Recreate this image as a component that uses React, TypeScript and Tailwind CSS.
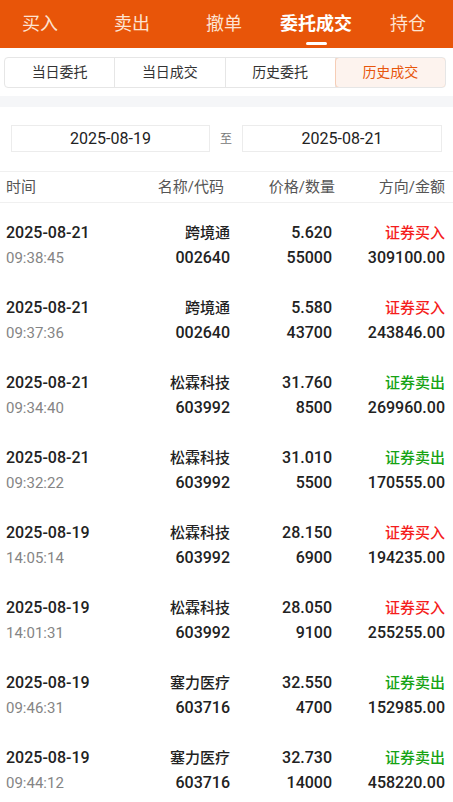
import React from "react";

const FONT = 'Roboto, "Noto Sans CJK SC", "Noto Sans", sans-serif';

type Row = {
  date: string;
  time: string;
  name: string;
  code: string;
  price: string;
  qty: string;
  dir: string;
  amount: string;
  buy: boolean;
};

const rows: Row[] = [
  { date: "2025-08-21", time: "09:38:45", name: "跨境通", code: "002640", price: "5.620", qty: "55000", dir: "证券买入", amount: "309100.00", buy: true },
  { date: "2025-08-21", time: "09:37:36", name: "跨境通", code: "002640", price: "5.580", qty: "43700", dir: "证券买入", amount: "243846.00", buy: true },
  { date: "2025-08-21", time: "09:34:40", name: "松霖科技", code: "603992", price: "31.760", qty: "8500", dir: "证券卖出", amount: "269960.00", buy: false },
  { date: "2025-08-21", time: "09:32:22", name: "松霖科技", code: "603992", price: "31.010", qty: "5500", dir: "证券卖出", amount: "170555.00", buy: false },
  { date: "2025-08-19", time: "14:05:14", name: "松霖科技", code: "603992", price: "28.150", qty: "6900", dir: "证券买入", amount: "194235.00", buy: true },
  { date: "2025-08-19", time: "14:01:31", name: "松霖科技", code: "603992", price: "28.050", qty: "9100", dir: "证券买入", amount: "255255.00", buy: true },
  { date: "2025-08-19", time: "09:46:31", name: "塞力医疗", code: "603716", price: "32.550", qty: "4700", dir: "证券卖出", amount: "152985.00", buy: false },
  { date: "2025-08-19", time: "09:44:12", name: "塞力医疗", code: "603716", price: "32.730", qty: "14000", dir: "证券卖出", amount: "458220.00", buy: false },
];

const tabs = ["买入", "卖出", "撤单", "委托成交", "持仓"];
const segs = ["当日委托", "当日成交", "历史委托", "历史成交"];

export default function App() {
  return (
    <div className="w-[453px] h-[802px] overflow-hidden bg-white" style={{ fontFamily: FONT }}>
      {/* top tab bar */}
      <div className="h-[48px] bg-[#e85509] flex items-stretch overflow-hidden">
        <div className="flex -ml-[6px]">
          {tabs.map((t, i) => {
            const active = i === 3;
            return (
              <div key={t} className="w-[92px] shrink-0 flex flex-col items-center justify-center relative">
                <span
                  className={
                    active
                      ? "text-[18px] font-bold text-white leading-none"
                      : "text-[18px] text-[#fde3d2] leading-none"
                  }
                >
                  {t}
                </span>
                {active && (
                  <span className="absolute bottom-[3px] w-[21px] h-[3px] rounded-full bg-white" />
                )}
              </div>
            );
          })}
        </div>
      </div>

      {/* segment control */}
      <div className="pl-[4px] pr-[7px] pt-[9px] pb-[8px]">
        <div className="flex h-[31px] rounded-[4px] border border-[#e6e6e6] overflow-hidden">
          {segs.map((s, i) => {
            const active = i === 3;
            return (
              <div
                key={s}
                className={
                  active
                    ? "flex-1 flex items-center justify-center text-[14px] text-[#e8560c] bg-[#fdf3ee] border border-[#f6cdb6] rounded-[4px] -m-px"
                    : "flex-1 flex items-center justify-center text-[14px] text-[#333] border-r border-[#e6e6e6]"
                }
              >
                {s}
              </div>
            );
          })}
        </div>
      </div>

      <div className="h-[11px] bg-[#f5f6f8]" />

      {/* date range */}
      <div className="flex items-center px-[11px] pt-[18px] pb-[19px] gap-[10px]">
        <div className="w-[199px] h-[27px] border border-[#ececec] flex items-center justify-center text-[16px] text-[#222]">
          2025-08-19
        </div>
        <div className="w-[12px] text-[12px] text-[#777] text-center">至</div>
        <div className="flex-1 h-[27px] border border-[#ececec] flex items-center justify-center text-[16px] text-[#222]">
          2025-08-21
        </div>
      </div>

      {/* header */}
      <div className="flex items-center h-[32px] border-t border-b border-[#f0f0f0] pl-[6px] pr-[8px] text-[15px] text-[#555]">
        <div className="flex-1">时间</div>
        <div className="w-[100px] text-right pr-[6px]">名称/代码</div>
        <div className="w-[105px] text-right">价格/数量</div>
        <div className="w-[110px] text-right">方向/金额</div>
      </div>

      {/* rows */}
      <div>
        {rows.map((r, idx) => (
          <div key={idx} className="pl-[6px] pr-[8px] pt-[20px] pb-[10px] h-[75px] flex flex-col gap-[5px]">
            <div className="flex items-center h-[20px]">
              <div className="flex-1 text-[16px] font-medium text-[#222]">{r.date}</div>
              <div className="w-[100px] text-right text-[15px] font-medium text-[#222]">{r.name}</div>
              <div className="w-[102px] text-right text-[16px] font-medium text-[#222]">{r.price}</div>
              <div
                className={
                  r.buy
                    ? "w-[113px] text-right text-[15px] font-medium text-[#f51d1d]"
                    : "w-[113px] text-right text-[15px] font-medium text-[#16a314]"
                }
              >
                {r.dir}
              </div>
            </div>
            <div className="flex items-center h-[20px]">
              <div className="flex-1 text-[15px] text-[#858585]">{r.time}</div>
              <div className="w-[100px] text-right text-[16px] font-medium text-[#222]">{r.code}</div>
              <div className="w-[102px] text-right text-[16px] font-medium text-[#222]">{r.qty}</div>
              <div className="w-[113px] text-right text-[16px] font-medium text-[#222]">{r.amount}</div>
            </div>
          </div>
        ))}
      </div>
    </div>
  );
}
